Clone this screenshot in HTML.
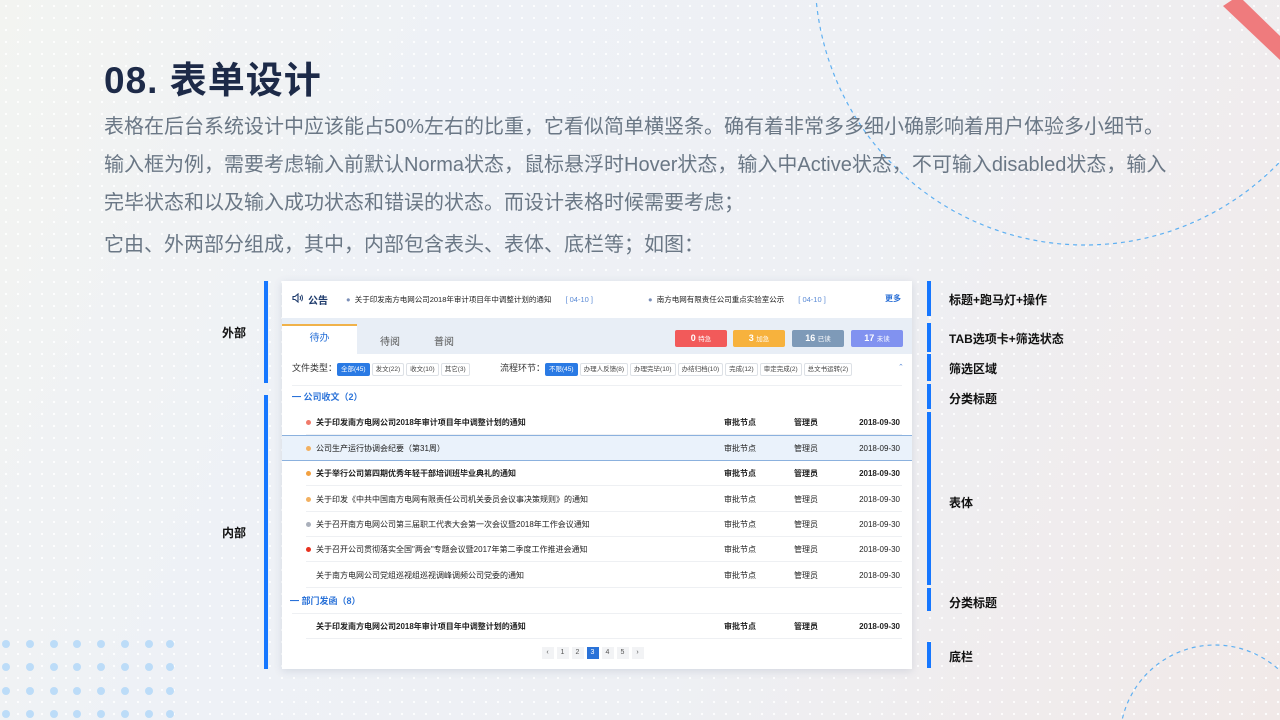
<!DOCTYPE html>
<html><head><meta charset="utf-8"><style>
*{margin:0;padding:0;box-sizing:border-box}
html,body{width:1280px;height:720px;overflow:hidden}
body{position:relative;font-family:"Liberation Sans","Noto Sans CJK SC",sans-serif;
background:linear-gradient(115deg,#f3f4f1 0%,#eef1f6 30%,#eef0f4 60%,#f1e9e8 100%);}
.dots{position:absolute;inset:0;background-image:radial-gradient(circle,#ffffff 1px,transparent 1.3px);background-size:12px 12px;opacity:.9}
.abs{position:absolute}
h1{position:absolute;left:104px;top:50px;font-size:37px;font-weight:bold;color:#1d2a48;letter-spacing:1px}
.p{position:absolute;left:104px;font-size:20px;color:#6a7785;white-space:nowrap}
.card{position:absolute;left:282px;top:281px;width:630px;height:388px;background:#fff;box-shadow:0 2px 8px rgba(60,80,120,.15);font-size:8px;color:#222}
.bar{position:absolute;width:4px;background:#1677ff}
.lab{position:absolute;font-size:12px;font-weight:bold;color:#111}
.row{position:absolute;left:24px;width:596px;height:25px;border-bottom:1px solid #eef0f3;font-size:8px;line-height:25px}
.row .d{position:absolute;left:0;top:10px;width:5px;height:5px;border-radius:50%}
.row .t{position:absolute;left:10px}
.row .a{position:absolute;left:418px}.row .b{position:absolute;left:488px}.row .c{position:absolute;right:2px}
.chip{display:inline-block;border:1px solid #dde1e6;border-radius:2px;padding:0 3px;height:13px;line-height:12px;font-size:6.5px;margin-right:2px;color:#444;background:#fff}
.chip.on{background:#2a7ae4;color:#fff;border-color:#2a7ae4}
.badge{position:absolute;top:49px;height:17px;width:52px;border-radius:2px;color:#fff;text-align:center;line-height:17px;font-size:9px;font-weight:bold}
.badge small{font-size:6.5px;font-weight:normal}
.pg{display:inline-block;width:12px;height:12px;background:#f2f3f5;margin:0 1.5px;text-align:center;line-height:12px;font-size:7px;color:#555}
</style></head><body>
<div class="dots"></div>
<svg class="abs" style="left:0;top:0" width="1280" height="720">
<circle cx="1085" cy="-25" r="270" fill="none" stroke="#5fb0f2" stroke-width="1.2" stroke-dasharray="4 4"/>
<circle cx="1215" cy="740" r="95" fill="none" stroke="#5fb0f2" stroke-width="1.2" stroke-dasharray="4 4"/>
<polygon points="1223,6 1232,0 1243,0 1280,36 1280,60" fill="#ef7b7d"/>
<g fill="#bcdcf8">
<g id="r"><circle cx="6" cy="644" r="4"/><circle cx="30" cy="644" r="4"/><circle cx="54" cy="644" r="4"/><circle cx="77" cy="644" r="4"/><circle cx="101" cy="644" r="4"/><circle cx="125" cy="644" r="4"/><circle cx="149" cy="644" r="4"/><circle cx="170" cy="644" r="4"/></g>
<use href="#r" y="23"/><use href="#r" y="47"/><use href="#r" y="70"/>
</g>
</svg>
<h1>08.&nbsp;表单设计</h1>
<div class="p" style="top:110px">表格在后台系统设计中应该能占50%左右的比重，它看似简单横竖条。确有着非常多多细小确影响着用户体验多小细节。</div>
<div class="p" style="top:148px">输入框为例，需要考虑输入前默认Norma状态，鼠标悬浮时Hover状态，输入中Active状态，不可输入disabled状态，输入</div>
<div class="p" style="top:186px">完毕状态和以及输入成功状态和错误的状态。而设计表格时候需要考虑；</div>
<div class="p" style="top:228px">它由、外两部分组成，其中，内部包含表头、表体、底栏等；如图：</div>

<div class="bar" style="left:264px;top:281px;height:102px"></div>
<div class="bar" style="left:264px;top:395px;height:274px"></div>
<div class="lab" style="left:222px;top:324px">外部</div>
<div class="lab" style="left:222px;top:524px">内部</div>

<div class="bar" style="left:927px;top:281px;height:35px"></div>
<div class="bar" style="left:927px;top:323px;height:29px"></div>
<div class="bar" style="left:927px;top:354px;height:27px"></div>
<div class="bar" style="left:927px;top:384px;height:25px"></div>
<div class="bar" style="left:927px;top:412px;height:173px"></div>
<div class="bar" style="left:927px;top:588px;height:23px"></div>
<div class="bar" style="left:927px;top:642px;height:26px"></div>
<div class="lab" style="left:949px;top:291px">标题+跑马灯+操作</div>
<div class="lab" style="left:949px;top:330px">TAB选项卡+筛选状态</div>
<div class="lab" style="left:949px;top:360px">筛选区域</div>
<div class="lab" style="left:949px;top:390px">分类标题</div>
<div class="lab" style="left:949px;top:494px">表体</div>
<div class="lab" style="left:949px;top:594px">分类标题</div>
<div class="lab" style="left:949px;top:648px">底栏</div>

<div class="card">
 <svg class="abs" style="left:10px;top:12px" width="12" height="10" viewBox="0 0 12 10"><path d="M1 3.5h2l3-2.5v8l-3-2.5h-2z" fill="none" stroke="#1d3a6b" stroke-width="1.1"/><path d="M8 3q1 2 0 4M9.5 1.8q2 3.2 0 6.4" fill="none" stroke="#1d3a6b" stroke-width="1"/></svg>
 <div class="abs" style="left:26px;top:11px;font-size:10px;font-weight:bold;color:#1d3a6b">公告</div>
 <div class="abs" style="left:64px;top:13px;font-size:7.5px;color:#222"><span style="color:#7b8fb8">●</span>&nbsp; 关于印发南方电网公司2018年审计项目年中调整计划的通知 <span style="color:#5b8bd6;margin-left:12px">[ 04-10 ]</span></div>
 <div class="abs" style="left:366px;top:13px;font-size:7.5px;color:#222"><span style="color:#7b8fb8">●</span>&nbsp; 南方电网有限责任公司重点实验室公示 <span style="color:#5b8bd6;margin-left:12px">[ 04-10 ]</span></div>
 <div class="abs" style="left:603px;top:12px;font-size:8px;color:#2a6fd6;font-weight:bold">更多</div>
 <div class="abs" style="left:0;top:37px;width:630px;height:36px;background:#e8eef6"></div>
 <div class="abs" style="left:0;top:43px;width:75px;height:30px;background:#fff;border-top:2px solid #f0b24a;text-align:center;line-height:26px;font-size:10px;color:#2a72d8">待办</div>
 <div class="abs" style="left:98px;top:52px;font-size:10px;color:#555">待阅</div>
 <div class="abs" style="left:152px;top:52px;font-size:10px;color:#555">普阅</div>
 <div class="badge" style="left:393px;background:#f25a5a">0 <small>特急</small></div>
 <div class="badge" style="left:451px;background:#f7b23d">3 <small>加急</small></div>
 <div class="badge" style="left:510px;background:#7e9ab8">16 <small>已读</small></div>
 <div class="badge" style="left:569px;background:#8192f0">17 <small>未读</small></div>
 <div class="abs" style="left:10px;top:80px;font-size:9px;color:#333;white-space:nowrap">文件类型：<span class="chip on">全部(45)</span><span class="chip">发文(22)</span><span class="chip">收文(10)</span><span class="chip">其它(3)</span></div>
 <div class="abs" style="left:218px;top:80px;font-size:9px;color:#333;white-space:nowrap">流程环节：<span class="chip on">不限(45)</span><span class="chip">办理人反馈(8)</span><span class="chip">办理完毕(10)</span><span class="chip">办结归档(10)</span><span class="chip">完成(12)</span><span class="chip">审定完成(2)</span><span class="chip">总文书运转(2)</span></div>
 <div class="abs" style="left:616px;top:82px;font-size:7px;color:#5b8bd6">⌃</div>
 <div class="abs" style="left:10px;top:104px;width:610px;border-top:1px solid #eef0f3"></div>
 <div class="abs" style="left:10px;top:109px;font-size:9px;color:#2a72d8;font-weight:bold">━ 公司收文（2）</div>
 <div class="row" style="top:129px;font-weight:bold"><span class="d" style="background:#f07a6a"></span><span class="t">关于印发南方电网公司2018年审计项目年中调整计划的通知</span><span class="a">审批节点</span><span class="b">管理员</span><span class="c">2018-09-30</span></div>
 <div class="abs" style="left:0;top:154px;width:630px;height:26px;background:#eaf2fb;border-top:1px solid #8bb1de;border-bottom:1px solid #8bb1de"></div>
 <div class="row" style="top:155px;border:none"><span class="d" style="background:#f2b060"></span><span class="t">公司生产运行协调会纪要（第31周）</span><span class="a">审批节点</span><span class="b">管理员</span><span class="c">2018-09-30</span></div>
 <div class="row" style="top:180px;font-weight:bold"><span class="d" style="background:#f2a040"></span><span class="t">关于举行公司第四期优秀年轻干部培训班毕业典礼的通知</span><span class="a">审批节点</span><span class="b">管理员</span><span class="c">2018-09-30</span></div>
 <div class="row" style="top:206px"><span class="d" style="background:#f2b060"></span><span class="t">关于印发《中共中国南方电网有限责任公司机关委员会议事决策规则》的通知</span><span class="a">审批节点</span><span class="b">管理员</span><span class="c">2018-09-30</span></div>
 <div class="row" style="top:231px"><span class="d" style="background:#aab0bb"></span><span class="t">关于召开南方电网公司第三届职工代表大会第一次会议暨2018年工作会议通知</span><span class="a">审批节点</span><span class="b">管理员</span><span class="c">2018-09-30</span></div>
 <div class="row" style="top:256px"><span class="d" style="background:#e8321f"></span><span class="t">关于召开公司贯彻落实全国"两会"专题会议暨2017年第二季度工作推进会通知</span><span class="a">审批节点</span><span class="b">管理员</span><span class="c">2018-09-30</span></div>
 <div class="row" style="top:282px"><span class="t">关于南方电网公司党组巡视组巡视调峰调频公司党委的通知</span><span class="a">审批节点</span><span class="b">管理员</span><span class="c">2018-09-30</span></div>
 <div class="abs" style="left:8px;top:313px;font-size:9px;color:#2a72d8;font-weight:bold">━ 部门发函（8）</div>
 <div class="abs" style="left:10px;top:332px;width:610px;border-top:1px solid #eef0f3"></div>
 <div class="row" style="top:333px;font-weight:bold"><span class="t">关于印发南方电网公司2018年审计项目年中调整计划的通知</span><span class="a">审批节点</span><span class="b">管理员</span><span class="c">2018-09-30</span></div>
 <div class="abs" style="left:258px;top:366px;white-space:nowrap"><span class="pg">‹</span><span class="pg">1</span><span class="pg">2</span><span class="pg" style="background:#2a72d8;color:#fff">3</span><span class="pg">4</span><span class="pg">5</span><span class="pg">›</span></div>
</div>
</body></html>
